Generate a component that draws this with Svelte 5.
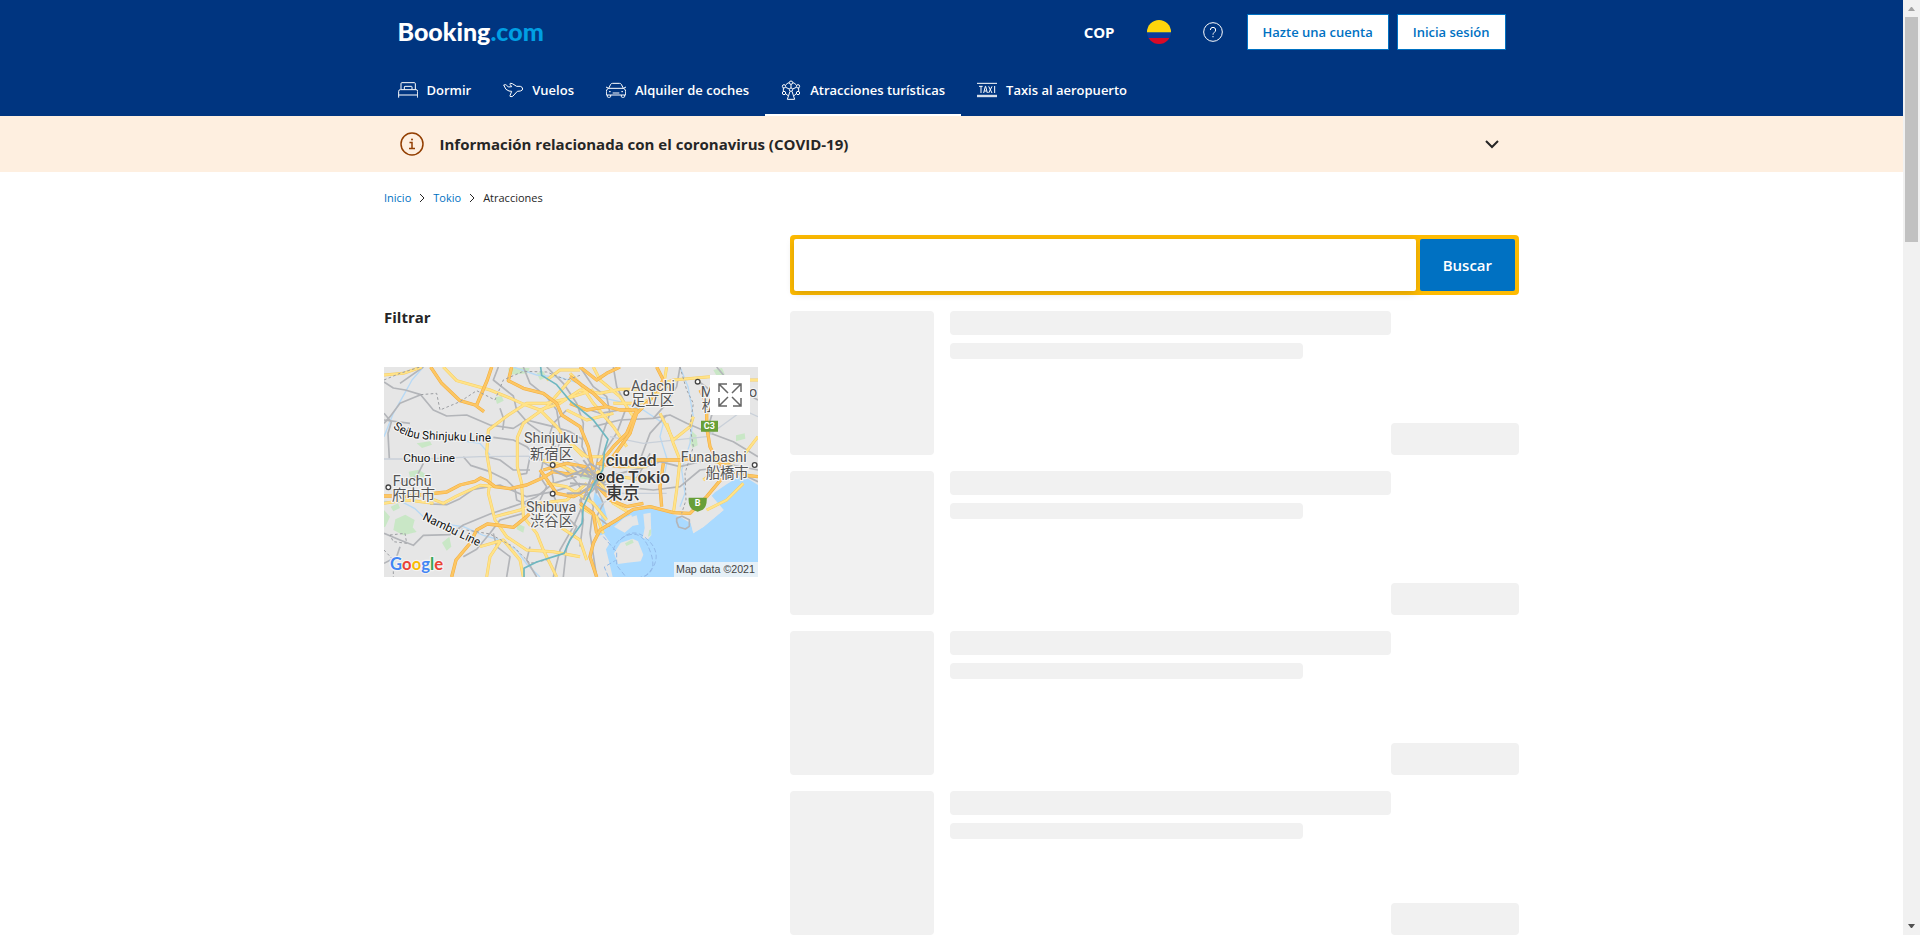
<script>
  const tabs = [
    { id: 'bed', label: 'Dormir' },
    { id: 'plane', label: 'Vuelos' },
    { id: 'car', label: 'Alquiler de coches' },
    { id: 'wheel', label: 'Atracciones turísticas', active: true },
    { id: 'taxi', label: 'Taxis al aeropuerto' },
  ];
  const placeholders = [1, 2, 3, 4];
  let query = $state('');

  const parks = [
    'M86 335l30-6 22 14-6 16-40 2z',
    'M345 112l20-4 6 14-20 10z',
    'M46 478l30-14 28 16-6 22 12 14-40 10-30-16z',
    'M186 548l22-18 6 30-14 12z',
    'M32 440l22-10 6 14-20 10z',
    'M385 24l64 0-6 16-56 4z',
    'M12 450l18 20-14 30-4 2z',
    'M410 490l24 10-4 18-20-10z',
    'M600 335l28-8 12 18-14 14-26-4z',
    'M935 212l14 14 4 30-16 8-10-28z',
    'M1068 226l26-6 2 16-28 8z',
    'M1000 30l26-6 8 18-22 10z',
    'M110 250l40-6 6 10-30 10z',
    'M470 40l20-6 10 18-20 8z',
    'M800 440l20-4 4 10-20 4z',
  ];
  const creeks = [
    'M12 424L70 428 105 446 130 470 190 492 250 500 310 526 360 540 410 570 440 612 480 651',
    'M400 21L470 45 540 52 600 70 650 110 720 125 790 150 850 190 840 230 862 300 850 360',
    'M12 230L40 160 74 100 96 60 130 21',
    'M900 21L924 80 940 170 930 250 905 330 915 400 900 440',
    'M330 285L300 250 230 240',
  ];
  const rails = [
    'M12 66L40 84 76 90 122 104 160 150 200 168 260 165 330 195 400 205 440 180 480 190 520 200 570 215 610 240',
    'M122 104L60 130 30 170 12 190M12 160L34 186 24 220 28 296',
    'M340 232L400 240 440 260 480 300 510 320M250 290L272 316 330 335 380 360 405 385 410 420 450 438',
    'M320 290L360 300 400 330 450 330',
    'M355 21L340 60 400 108 410 150 445 190 500 230 560 300 605 350',
    'M12 520L60 540 100 556 130 526 210 524 250 495 330 462 420 432 470 410 520 370 590 350',
    'M12 610L50 590 60 560M250 590L290 568 330 520 360 480 430 460',
    'M150 432L200 434 240 416 280 388 360 375 440 410 520 395 600 370',
    'M430 21L450 70 500 110 530 150 540 210 535 270 560 330 600 380 606 440 580 500 540 570 520 651',
    'M500 21L550 70 590 130 610 190 606 260 640 330 620 390 640 440 630 520 650 651',
    'M600 21L640 80 680 110 690 160 665 230 650 310 640 360',
    'M512 320L520 360 518 400 540 450 590 500 560 560 550 651',
    'M490 300L480 350 500 380 480 420',
    'M640 355L720 340 800 320 840 305 900 320 980 300 1134 330',
    'M640 370L720 380 820 390 900 380 960 330 1040 320 1134 365',
    'M640 200L720 180 820 175 870 165 920 190 980 215 1060 245 1134 290',
    'M700 21L710 80 740 140 710 220 670 280 650 350',
    'M820 175L860 130 890 80 900 21M980 215L1000 150 990 90 950 60',
    'M810 280L790 320 760 370M860 165L810 220 780 300',
    'M645 375L670 430 650 470 690 500M640 390L600 420 610 480 600 560',
    'M890 475l16-6 22 10 0 20-12 8-20-6-6-16z',
    'M12 180L90 190M130 21L60 70M130 310L110 350 60 370',
    'M380 651L390 590 350 560 340 520M450 560L440 600 470 651',
    'M360 145L372 180 368 210M450 290L440 340 418 344M560 150L520 190 500 250',
    'M1134 120L1060 80 1010 21M600 140L660 160 720 150',
  ];
  const yellows = [
    'M12 45L70 40 125 21',
    'M190 21L230 62 330 90 385 112 430 132 480 150 530 200 560 240 610 290',
    'M640 90L560 116 500 130 440 130 385 165 325 210 320 280 332 350 325 400 345 480 380 530 440 570 520 575 600 590',
    'M570 60L500 140 430 190 412 232 412 320 425 370 430 470 470 520 490 570 530 651',
    'M160 418L190 430 230 408 300 376 350 380',
    'M345 470L420 450 480 430 560 420 620 370',
    'M300 560L370 540 420 600 430 651M360 545L330 590 320 651',
    'M480 150L540 130 600 90 660 100 720 88 800 88 880 60 990 50',
    'M570 40L600 70 640 130 700 200 740 260',
    'M640 21L660 60 720 110 760 170 750 220 690 300 650 340',
    'M560 240L620 290 680 290 720 320 800 320',
    'M860 190L880 250 900 300 890 390 880 460',
    'M840 160L860 200 880 240 930 200 940 170',
    'M700 130L780 130 830 110 880 60',
    'M980 300L1030 310 1080 300 1134 230M970 360L1010 330 1050 350',
    'M650 350L700 430 750 460M640 370L720 350 790 360',
    'M500 370L560 380 640 430 680 480',
    'M480 300L530 310 590 340 640 340',
    'M600 440L650 470 670 520M540 500L600 540 620 600',
    'M560 150L620 180 700 160M1134 60L1080 60 1030 110 1000 90',
    'M12 430L80 420 160 430M1090 370L1040 420 980 450',
    'M500 60L540 30 600 30M860 21L850 80 830 110',
  ];
  const oranges = [
    'M152 21L185 70 240 122 285 135 312 155',
    'M335 21L322 60 290 135',
    'M395 21L385 62 430 85 490 100 530 130 545 165 600 200 625 260 640 330',
    'M12 408L90 408 200 396 240 375 285 364 302 354 324 364 345 380 390 386 440 375 485 355 520 335 580 345',
    'M215 651L228 600 270 550 290 510 322 492 350 495 400 502 440 470 470 440 500 430',
    'M480 330L530 400 580 410 630 385 650 350 615 320 560 310 490 330',
    'M570 50L640 100 680 140 720 150 770 150 740 220 700 260 660 310',
    'M830 21L850 60 810 120 770 160 750 220 700 290',
    'M960 90L980 130 980 200 990 260 1010 300 1040 330 1090 345 1134 350',
    'M650 310L720 320 830 300 900 300 990 290 1060 320',
    'M850 310L840 380 845 440M1030 350L980 410 930 460 880 458 810 440 760 448 710 480 660 510 640 550 630 590 650 651',
    'M645 370L690 420 740 440 790 430M600 430L640 460 650 520',
    'M600 21L650 60 680 40 720 21M570 130L620 150 680 140',
  ];
  const dots = [
    'M12 60L60 40 120 21M122 104L170 100 180 150 240 125 290 92 345 120 370 60 430 34 500 36 560 60 600 46',
    'M30 525L75 520 80 550 40 545zM12 570L40 600 40 651M230 505L330 522 400 560 450 610 500 600',
    'M900 21L920 90 940 130 930 200 940 260 915 340 918 420 905 460',
  ];
  const labels = [
    { t: 'Shinjuku', x: 432, y: 249 }, { t: '新宿区', x: 450, y: 298 },
    { t: 'Shibuya', x: 438, y: 455 }, { t: '渋谷区', x: 450, y: 498 },
    { t: 'Fuchū', x: 38, y: 378 }, { t: '府中市', x: 36, y: 420 },
    { t: 'Adachi', x: 753, y: 94 }, { t: '足立区', x: 753, y: 136 },
    { t: 'Matsudo', x: 962, y: 112 }, { t: '松戸市', x: 965, y: 154 },
    { t: 'Funabashi', x: 902, y: 305 }, { t: '船橋市', x: 977, y: 354 },
  ];
  const towns = [[518, 315], [518, 401], [25, 382], [739, 99], [953, 65], [1124, 315]];
</script>

{#snippet icon(id)}
  <svg class="icon" viewBox="0 0 60 60" aria-hidden="true">
    {#if id === 'bed'}
      <path d="M9 28V11q0-3 3-3h37q3 0 3 3v17M19 28v-7q0-2 2-2h19q2 0 2 2v7M2 53V34q0-5 5-5h47q5 0 5 5v19M2 45h56" />
    {:else if id === 'plane'}
      <path d="M2 15l6-1q2 0 3 2l5 5 10-1-5-7q-1-3 2-3l5 1 13 8 11 0q7 2 7 8-1 5-7 6l-9 1-13 14q-2 2-6 2-4 0-3-3l5-13-8-1Q8 32 2 15z" />
    {:else if id === 'car'}
      <path d="M8 25l6-12q2-3 6-3h20q4 0 6 3l6 12M8 25h44q7 2 7 9v11H1V34q0-7 7-9zM0 21l8 4M60 21l-8 4M4 45v4q0 3 3 3h4q3 0 3-3v-4M46 45v4q0 3 3 3h4q3 0 3-3v-4M20 39h20M9 35h5M46 35h5" />
    {:else if id === 'wheel'}
      <circle cx="30" cy="8" r="5" /><circle cx="9" cy="19" r="5" /><circle cx="51" cy="19" r="5" />
      <circle cx="9" cy="39" r="5" /><circle cx="51" cy="39" r="5" /><circle cx="30" cy="29" r="5" />
      <path d="M14 15q4-5 10-7M46 15q-4-5-10-7M7 24v10M53 24v10M30 13v11M14 22l11 5M46 22l-11 5M27 34l-8 24h22l-8-24M14 41l7 6M46 41l-7 6" />
    {:else}
      <path d="M0 10h60M0 46h60M0 50h60M6 19h11M12 19v20M20 39l5-20h1l5 20M22 33h7M35 19l10 20M45 19L35 39M53 18v21" />
    {/if}
  </svg>
{/snippet}

{#snippet chevron()}
  <svg class="crumb-arrow" viewBox="0 0 8 12" aria-hidden="true"><path d="M2 2l4 4-4 4" /></svg>
{/snippet}

<div class="shell">
  <div class="page">
    <header>
      <div class="inner">
        <div class="topbar">
          <a class="logo" href="#inicio">Booking<span>.com</span></a>
          <div class="tools">
            <button class="currency">COP</button>
            <button class="plain" aria-label="Español">
              <svg class="flag" viewBox="0 0 24 24" aria-hidden="true">
                <clipPath id="round"><circle cx="12" cy="12" r="12" /></clipPath>
                <g clip-path="url(#round)">
                  <path fill="#ffd60c" d="M0 0h24v12H0z" />
                  <path fill="#0b3a9c" d="M0 12h24v6H0z" />
                  <path fill="#d80a27" d="M0 18h24v6H0z" />
                  <path fill="#416b7b" d="M0 12h24v1H0z" />
                </g>
              </svg>
            </button>
            <button class="plain" aria-label="Ayuda">
              <svg class="icon" viewBox="0 0 60 60" aria-hidden="true">
                <circle cx="30" cy="30" r="28" />
                <path d="M22 24q0-8 8-8t8 8q0 4-4 7-4 3-4 7" />
                <circle cx="30" cy="44" r="2" class="dot" />
              </svg>
            </button>
            <div class="account">
              <button class="white">Hazte una cuenta</button>
              <button class="white">Inicia sesión</button>
            </div>
          </div>
        </div>
        <nav>
          {#each tabs as tab}
            <a href="#{tab.id}" class:active={tab.active}>{@render icon(tab.id)}{tab.label}</a>
          {/each}
        </nav>
      </div>
    </header>

    <section class="notice">
      <button class="inner notice-row">
        <svg class="info" viewBox="0 0 48 48" aria-hidden="true">
          <circle cx="24" cy="24" r="22" />
          <path d="M19 21h5v12M18 33h12" />
          <circle cx="24" cy="15" r="2" class="dot" />
        </svg>
        <strong>Información relacionada con el coronavirus (COVID-19)</strong>
        <svg class="down" viewBox="0 0 14 10" aria-hidden="true"><path d="M1 2l6 6 6-6" /></svg>
      </button>
    </section>

    <main>
      <nav class="crumbs">
        <a href="#inicio">Inicio</a>{@render chevron()}<a href="#tokio">Tokio</a>{@render chevron()}<span>Atracciones</span>
      </nav>
      <div class="columns">
        <aside>
          <h2>Filtrar</h2>
          <div class="map">
            <svg viewBox="12 21 1122 630" role="img" aria-label="Tokio">
              <defs>
                <path id="seibu" d="M38 204Q82 236 130 238T365 246" />
                <path id="nambu" d="M126 478L330 576" />
              </defs>
              <path fill="#e6e6e6" d="M12 21h1122v630H12z" />
              <g fill="#c9e7c6">{#each parks as d}<path {d} />{/each}</g>
              <g class="line" stroke="#b7d9f5" stroke-width="4">{#each creeks as d}<path {d} />{/each}</g>
              <path fill="#aadaff" d="M1134 375l-48-30-46 28-35 24-10 10 36 43-60 50-31 20-8-30-32-20-30-10-60-15-50 8-40 18-30 22-40 36-18 42-2 28 15 52h489z" />
              <path fill="#aadaff" d="M644 395l24 30 14 50-14 26-8-46-20-36z" />
              <g fill="#e6e6e6">
                <path d="M702 500l30-26 22-10 8 30-28 24zM790 462l22-4 2 68-10 12-16-4 6-30zM752 472l18-6 6 28-20 4z" />
                <path d="M702 580l20-32 36-12 16 8 16 40-8 20-40 4-28 4z" />
                <path d="M650 530l22-8 18 26-12 20 10 40 10 43h-44l-20-60zM995 410l36 40-60 50-31 20-7-30 20-30z" />
              </g>
              <path fill="#c9e7c6" d="M735 550l22-12 4 10-22 10zM808 510l6-2-2 18-8 4z" />
              <g class="line" stroke="#92b9e8" stroke-width="3" stroke-dasharray="14 7">
                <path d="M670 530l40 46 0 40 28 35M685 651l-12-30 34-20M720 540q40-40 80-4t24 76q-12 24-32 39M700 570q10-36 50-46t62 54-30 73" />
              </g>
              <g class="line" stroke="#b3b5b9" stroke-width="5">{#each rails as d}<path {d} />{/each}</g>
              <g class="line" stroke="#c9d0d9" stroke-width="4">
                <path d="M12 297H130L300 290 560 288 640 340M690 230L790 250 980 230 1090 150 1134 170M650 440L720 400 860 400" />
              </g>
              <g class="line" stroke="#f8ce62" stroke-width="9">{#each yellows as d}<path {d} />{/each}</g>
              <g class="line" stroke="#ffe389" stroke-width="6">{#each yellows as d}<path {d} />{/each}</g>
              <g class="line" stroke="#f2ad3d" stroke-width="10">{#each oranges as d}<path {d} />{/each}</g>
              <g class="line" stroke="#fdc764" stroke-width="7">{#each oranges as d}<path {d} />{/each}</g>
              <g class="line" stroke="#9c9ea2" stroke-width="3" stroke-dasharray="8 7">{#each dots as d}<path {d} />{/each}</g>
              <g class="line" stroke="#b0b2b6" stroke-width="6">
                <path d="M520 330L560 350 610 330 650 365 600 400 560 400M590 320L660 350 640 390M600 350L630 310 660 330M570 370L640 375 690 400M610 300L640 340 650 400M634 340L670 370 700 340M580 340L634 352 610 420" />
              </g>
              <path class="line" stroke="#6db7c0" stroke-width="5" d="M482 21L485 46 530 74 570 122 640 180 684 238 674 270 668 330 640 375 610 440 606 490 570 540 552 580 470 606 432 625 432 651" />

              <g class="names">
                {#each labels as l}<text x={l.x} y={l.y}>{l.t}</text>{/each}
              </g>
              <g class="capital">
                <text x="677" y="317">ciudad</text>
                <text x="677" y="368">de Tokio</text>
                <text x="677" y="418">東京</text>
              </g>
              <g class="lines">
                <text><textPath href="#seibu">Seibu Shinjuku Line</textPath></text>
                <text x="70" y="306">Chuo Line</text>
                <text><textPath href="#nambu">Nambu Line</textPath></text>
              </g>
              <g fill="#fff" stroke="#444" stroke-width="4">
                {#each towns as [cx, cy]}<circle {cx} {cy} r="7" />{/each}
                <circle cx="662" cy="351" r="10" stroke="#111" />
              </g>
              <circle cx="662" cy="351" r="5" fill="#111" />
              <path fill="#689f38" d="M963 182h51v33h-51zM926 413h54q2 26-12 36l-15 6-15-6q-14-10-12-36z" />
              <g class="shields">
                <text x="988" y="208">C3</text>
                <text x="953" y="439">B</text>
              </g>
              <text class="google" x="30" y="630"><tspan fill="#4285f4">G</tspan><tspan fill="#ea4335">o</tspan><tspan fill="#fbbc05">o</tspan><tspan fill="#4285f4">g</tspan><tspan fill="#34a853">l</tspan><tspan fill="#ea4335">e</tspan></text>
              <path fill="#f5f5f5" fill-opacity=".8" d="M882 606h252v45H882z" />
              <text class="credit" x="888" y="639">Map data ©2021</text>
            </svg>
            <button class="expand" aria-label="Ampliar mapa">
              <svg viewBox="0 0 80 80" aria-hidden="true">
                <path d="M18 34V18h16M18 18l18 18M46 18h16v16M62 18L44 36M18 46v16h16M18 62l18-18M62 46v16H46M62 62L44 44" />
              </svg>
            </button>
          </div>
        </aside>

        <section class="results">
          <form class="search" onsubmit={(e) => e.preventDefault()}>
            <input type="text" aria-label="Buscar atracciones" bind:value={query} />
            <button>Buscar</button>
          </form>
          {#each placeholders as p (p)}
            <div class="item" aria-hidden="true">
              <div class="bone photo"></div>
              <div class="lines-col">
                <div class="bone title"></div>
                <div class="bone sub"></div>
              </div>
              <div class="bone price"></div>
            </div>
          {/each}
        </section>
      </div>
    </main>
  </div>

  <div class="scrollbar" aria-hidden="true">
    <svg viewBox="0 0 17 17"><path fill="#a3a3a3" d="M5 11h7L9 7H8z" /></svg>
    <div class="thumb"></div>
    <svg class="end" viewBox="0 0 17 17"><path fill="#505050" d="M5 6h7l-3 4H8z" /></svg>
  </div>
</div>

<style>
  :global(body) {
    margin: 0;
  }
  .shell {
    display: grid;
    grid-template-columns: minmax(0, 1fr) 17px;
    height: 100vh;
    overflow: hidden;
    background: #fff;
    color: #262626;
    font-family: "Open Sans", "Noto Sans", sans-serif;
    font-size: 14px;
    line-height: 20px;
  }
  .page {
    overflow: hidden;
  }
  button {
    font: inherit;
    color: inherit;
    margin: 0;
    padding: 0;
    border: 0;
    background: none;
    cursor: pointer;
  }
  a {
    text-decoration: none;
    color: #0071c2;
  }
  header {
    background: #003580;
    color: #fff;
  }
  .inner {
    box-sizing: border-box;
    width: 100%;
    max-width: 1108px;
    margin: 0 auto;
  }
  .topbar {
    display: flex;
    align-items: center;
    justify-content: space-between;
    height: 64px;
  }
  .logo {
    padding-bottom: 2px;
    color: #fff;
    font: 900 25px/30px Lato, sans-serif;
  }
  .logo span {
    color: #009fe3;
  }
  .tools {
    display: flex;
    align-items: center;
    gap: 32px;
  }
  .currency {
    font-size: 15px;
    font-weight: 700;
  }
  .plain {
    display: flex;
  }
  .flag {
    width: 24px;
    height: 24px;
  }
  .account {
    display: flex;
    gap: 8px;
    margin-left: -8px;
  }
  .white {
    height: 36px;
    padding: 0 15px;
    border: 1px solid #0071c2;
    background: #fff;
    color: #0071c2;
    font-size: 13px;
    font-weight: 600;
    white-space: nowrap;
  }
  .icon {
    flex: none;
    width: 20px;
    height: 20px;
    fill: none;
    stroke: #fff;
    stroke-width: 3;
    stroke-linejoin: round;
  }
  .dot {
    fill: currentColor;
    stroke: none;
  }
  header nav {
    display: flex;
    margin-left: -16px;
  }
  header nav a {
    display: flex;
    align-items: center;
    gap: 9px;
    box-sizing: border-box;
    height: 52px;
    padding: 2px 16px 0;
    border-bottom: 2px solid transparent;
    color: #fff;
    font-size: 13px;
    font-weight: 600;
    white-space: nowrap;
  }
  header nav a.active {
    border-color: #fff;
  }
  .notice {
    background: #feefe0;
  }
  .notice-row {
    display: flex;
    align-items: center;
    gap: 16px;
    height: 56px;
    padding: 0 7px 0 2px;
    text-align: left;
  }
  .notice-row strong {
    flex: 1;
    font-size: 15px;
    font-weight: 700;
  }
  .info {
    width: 24px;
    height: 24px;
    fill: none;
    stroke: #923e01;
    stroke-width: 3;
    color: #923e01;
  }
  .down {
    width: 14px;
    height: 10px;
    fill: none;
    stroke: #262626;
    stroke-width: 2;
  }
  main {
    max-width: 1135px;
    margin: 0 auto;
  }
  .crumbs {
    display: flex;
    align-items: center;
    gap: 7px;
    padding: 16px 0 27px;
    font-size: 11px;
  }
  .crumb-arrow {
    width: 8px;
    height: 12px;
    fill: none;
    stroke: #262626;
  }
  .columns {
    display: grid;
    grid-template-columns: minmax(0, 374fr) minmax(0, 729fr);
    align-items: start;
    gap: 32px;
  }
  aside {
    padding-top: 72px;
  }
  h2 {
    margin: 0 0 40px;
    font-size: 15px;
    line-height: 20px;
    font-weight: 700;
  }
  .map {
    position: relative;
    overflow: hidden;
  }
  .map > svg {
    display: block;
    width: 100%;
  }
  .line {
    fill: none;
    stroke-linejoin: round;
  }
  .map text {
    font-family: Roboto, "Noto Sans CJK JP", sans-serif;
    paint-order: stroke;
    stroke: #f3f3f3;
    stroke-width: 7px;
    stroke-linejoin: round;
  }
  .names {
    font-size: 43px;
    fill: #555;
  }
  .capital {
    font-size: 51px;
    font-weight: 500;
    fill: #3a3a3a;
  }
  .lines {
    font-size: 35px;
    fill: #111;
  }
  .map .shields text {
    fill: #fff;
    stroke: none;
    font-size: 27px;
    font-weight: 700;
    text-anchor: middle;
  }
  .map .google {
    font: 700 50px Lato, sans-serif;
  }
  .map .credit {
    font: 32px "Liberation Sans", Arial, sans-serif;
    fill: #444;
    stroke: none;
  }
  .expand {
    position: absolute;
    top: 8px;
    right: 8px;
    width: 40px;
    height: 40px;
    background: #fff;
  }
  .expand svg {
    display: block;
    fill: none;
    stroke: #666;
    stroke-width: 3;
  }
  .results {
    display: flex;
    flex-direction: column;
    gap: 16px;
  }
  .search {
    display: flex;
    gap: 4px;
    padding: 4px;
    border-radius: 4px;
    background: #febb02;
  }
  .search input {
    flex: 1;
    min-width: 0;
    height: 52px;
    box-sizing: border-box;
    padding: 0 16px;
    border: 0;
    border-radius: 2px;
    background: #fff;
    font: inherit;
    box-shadow: 0 2px 8px rgba(0, 0, 0, 0.16);
  }
  .search button {
    padding: 0 23px;
    border-radius: 2px;
    background: #0071c2;
    color: #fff;
    font-size: 15px;
    font-weight: 600;
  }
  .item {
    display: flex;
    height: 144px;
  }
  .bone {
    border-radius: 4px;
    background: #f1f1f1;
  }
  .photo {
    width: 144px;
    margin-right: 16px;
  }
  .lines-col {
    flex: 1;
  }
  .title {
    height: 24px;
  }
  .sub {
    width: 80%;
    height: 16px;
    margin-top: 8px;
  }
  .price {
    align-self: flex-end;
    width: 128px;
    height: 32px;
  }
  .scrollbar {
    display: flex;
    flex-direction: column;
    background: #f1f1f1;
  }
  .scrollbar svg {
    width: 17px;
    height: 17px;
  }
  .thumb {
    height: 225px;
    margin: 0 2px;
    background: #c1c1c1;
  }
  .end {
    margin-top: auto;
  }
</style>
